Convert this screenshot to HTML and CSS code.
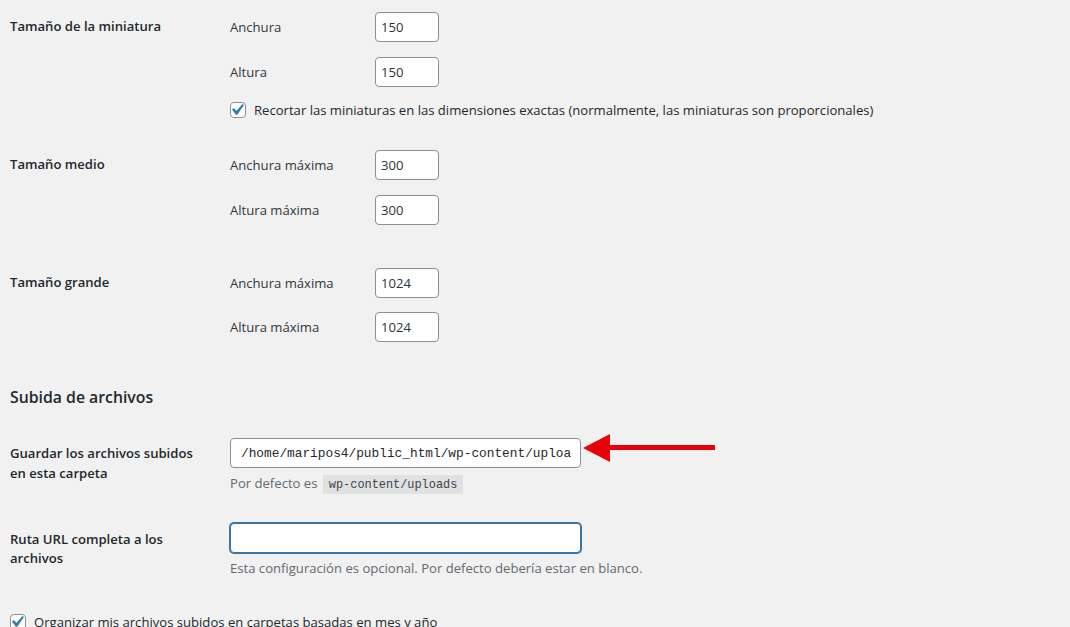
FILE: index.html
```
<!DOCTYPE html>
<html lang="es">
<head>
<meta charset="utf-8">
<title>Ajustes de medios</title>
<link rel="stylesheet" href="styles.css">
</head>
<body>
<div class="page">
  <div class="row r1">
    <div class="th">Tamaño de la miniatura</div>
    <div class="td">
      <div class="field"><label class="sub">Anchura</label><input class="small" type="text" value="150"></div>
      <div class="field"><label class="sub">Altura</label><input class="small" type="text" value="150"></div>
      <label class="check"><span class="cb"><svg viewBox="0 0 16 16" width="16" height="16"><rect x="0.5" y="0.5" width="15" height="15" rx="3.5" fill="#fff" stroke="#8c8f94"/><path transform="translate(-4.6,-3.6) scale(1.15)" d="M14.83 4.89l1.34.94-5.81 8.38H9.02L5.78 9.67l1.34-1.25 2.57 2.4z" fill="#2a7fb8"/></svg></span>Recortar las miniaturas en las dimensiones exactas (normalmente, las miniaturas son proporcionales)</label>
    </div>
  </div>

  <div class="row r2">
    <div class="th">Tamaño medio</div>
    <div class="td">
      <div class="field"><label class="sub">Anchura máxima</label><input class="small" type="text" value="300"></div>
      <div class="field"><label class="sub">Altura máxima</label><input class="small" type="text" value="300"></div>
    </div>
  </div>

  <div class="row r3">
    <div class="th">Tamaño grande</div>
    <div class="td">
      <div class="field"><label class="sub">Anchura máxima</label><input class="small" type="text" value="1024"></div>
      <div class="field"><label class="sub">Altura máxima</label><input class="small" type="text" value="1024"></div>
    </div>
  </div>

  <h2 class="section">Subida de archivos</h2>

  <div class="row r4">
    <div class="th wrap">Guardar los archivos subidos en esta carpeta</div>
    <div class="td">
      <input class="regular mono" type="text" value="/home/maripos4/public_html/wp-content/uploads">
      <p class="description">Por defecto es <code>wp-content/uploads</code></p>
    </div>
  </div>

  <div class="row r5">
    <div class="th wrap">Ruta URL completa a los archivos</div>
    <div class="td">
      <input class="regular focus" type="text" value="">
      <p class="description">Esta configuración es opcional. Por defecto debería estar en blanco.</p>
    </div>
  </div>

  <label class="check r6"><span class="cb"><svg viewBox="0 0 16 16" width="16" height="16"><rect x="0.5" y="0.5" width="15" height="15" rx="3.5" fill="#fff" stroke="#8c8f94"/><path transform="translate(-4.6,-3.6) scale(1.15)" d="M14.83 4.89l1.34.94-5.81 8.38H9.02L5.78 9.67l1.34-1.25 2.57 2.4z" fill="#2a7fb8"/></svg></span>Organizar mis archivos subidos en carpetas basadas en mes y año</label>

  <svg class="arrow" width="140" height="36" viewBox="0 0 140 36"><rect x="28" y="15" width="107" height="5" fill="#e8000b"/><polygon points="3,18 30,4 30,32" fill="#e8000b"/></svg>
</div>
</body>
</html>
```
FILE: styles.css
```
html, body {
  margin: 0;
  padding: 0;
  background: #f1f1f1;
}
body {
  font-family: "Open Sans", "Noto Sans", sans-serif;
  font-size: 13.1px;
  color: #23282d;
  overflow: hidden;
}
.page {
  position: relative;
  padding: 12px 10px 0;
}
.row {
  display: flex;
  align-items: flex-start;
}
.th {
  flex: none;
  width: 220px;
  font-weight: 600;
  line-height: 20px;
  padding-top: 4px;
  box-sizing: border-box;
}
.th.wrap {
  padding-right: 20px;
  padding-top: 5px;
}
.td {
  display: flex;
  flex-direction: column;
  align-items: flex-start;
  gap: 15px;
}
.field {
  display: flex;
  align-items: center;
  height: 30px;
}
.sub {
  width: 145px;
  flex: none;
  line-height: 20px;
  color: #32373c;
}
input {
  font-family: "Open Sans", "Noto Sans", sans-serif;
  font-size: 13.1px;
  color: #2c3338;
  background: #fff;
  border: 1px solid #8c8f94;
  border-radius: 4px;
  box-sizing: border-box;
  height: 30px;
  margin: 0;
  outline: none;
}
input.small {
  width: 64px;
  padding: 0 5px;
}
input.regular {
  width: 351px;
  padding: 0 8px;
}
input.mono {
  font-family: "Liberation Mono", "DejaVu Sans Mono", monospace;
  font-size: 12.8px;
  color: #23282d;
  padding: 0 8px 0 10px;
}
input.focus {
  border-color: #3b74a2;
  box-shadow: 0 0 0 1px #3b74a2;
}
.check {
  display: flex;
  align-items: center;
  line-height: 20px;
  height: 20px;
  white-space: nowrap;
}
.td .check {
  margin-top: -2px;
}
.cb {
  display: flex;
  width: 16px;
  height: 16px;
  margin-right: 8px;
  flex: none;
}
.r2 { margin-top: 30px; }
.r3 { margin-top: 43px; }
.r3 .td { gap: 14px; }
.section {
  margin: 44px 0 0;
  font-size: 15.8px;
  font-weight: 600;
  line-height: 22px;
  color: #23282d;
}
.r4 { margin-top: 30px; }
.r4 .td, .r5 .td { gap: 5px; }
.r5 { margin-top: 30px; }
.r5 .th.wrap { padding-top: 7px; line-height: 19px; }
.r6 { margin-top: 34px; }
.description {
  margin: 0;
  line-height: 20px;
  height: 20px;
  color: #646970;
}
code {
  font-family: "Liberation Mono", "DejaVu Sans Mono", monospace;
  font-size: 11.9px;
  line-height: 14px;
  background: #e1e1e1;
  color: #3c434a;
  padding: 3px 6px 2px;
  margin-left: 2px;
}
.arrow {
  position: absolute;
  left: 580px;
  top: 430px;
}
```
